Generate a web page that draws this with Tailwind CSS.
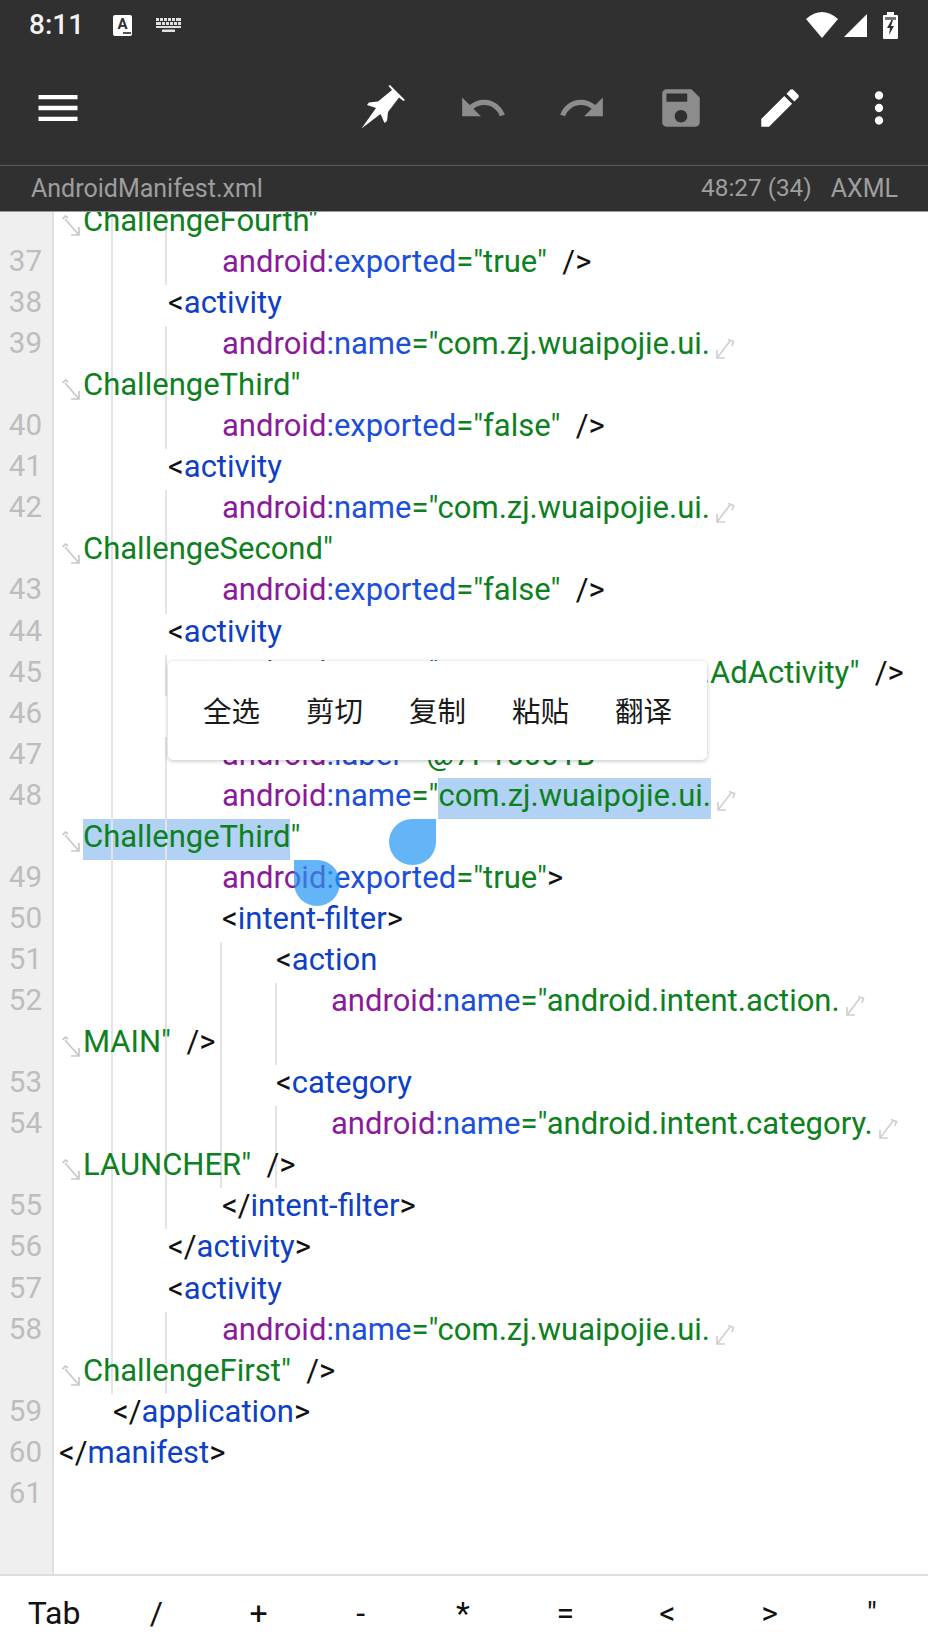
<!doctype html>
<html lang="zh-CN">
<head>
<meta charset="UTF-8">
<title>AndroidManifest.xml</title>
<script src="https://cdn.jsdelivr.net/npm/@tailwindcss/browser@4"></script>
</head>
<body class="bg-white">

<!-- wrap arrows -->
<svg class="hidden">
  <symbol id="wrap-end" viewBox="0 0 20 22"><path d="M15 3L2 20M2 12V20H10M13 1.5L18.500 3.500L17 8" fill="none" stroke="#d0d0d0" stroke-width="1.700"/></symbol>
  <symbol id="wrap-start" viewBox="0 0 20 22"><path d="M4 4L18 20M18 12V20H10M1.500 4L4.500 1L7 3" fill="none" stroke="#c8c8c8" stroke-width="1.700"/></symbol>
</svg>

<div class="relative flex h-[1650px] w-[928px] flex-col overflow-hidden font-[Roboto,sans-serif]">

  <header class="shrink-0 bg-[#303030]">
    <!-- status bar -->
    <div class="flex h-[50px] items-center pl-[29px] pr-[30px]">
      <span class="w-[54px] text-[28px] font-medium leading-none text-[#f2f2f2]">8:11</span>
      <div class="relative ml-[30px] flex h-[21px] w-[19px] justify-center rounded-[2px] bg-white">
        <span class="text-[15px] font-bold leading-[18px] text-[#303030]">A</span>
        <span class="absolute bottom-[2px] right-[1px] h-[2px] w-[8px] bg-[#555]"></span>
      </div>
      <svg class="ml-[24px]" width="25" height="14" viewBox="0 0 25 14" fill="#e0e0e0">
        <path d="M0 0h3v3H0zM4 0h3v3H4zM8 0h3v3H8zM12 0h3v3h-3zM16 0h3v3h-3zM20 0h5v3h-5zM0 4h5v3H0zM6 4h3v3H6zM10 4h3v3h-3zM14 4h3v3h-3zM18 4h3v3h-3zM22 4h3v3h-3zM0 8h25v2H0zM6 11.500h13V14H6z"/>
      </svg>
      <svg class="ml-auto" width="32" height="26" viewBox="0 0 32 26" fill="#fff"><path d="M0 7Q16-7 32 7L16 26Z"/></svg>
      <svg class="ml-[6px]" width="23" height="23" viewBox="0 0 23 23" fill="#fff"><path d="M23 0V23H0Z"/></svg>
      <svg class="ml-[16px]" width="15" height="27" viewBox="0 0 15 27">
        <path d="M4 0h7v3h3a1 1 0 0 1 1 1v22a1 1 0 0 1-1 1H1a1 1 0 0 1-1-1V4a1 1 0 0 1 1-1h3z" fill="#fff"/>
        <path d="M2 5h11v3H2z" fill="#777"/>
        <path d="M8.500 8L4 16h3l-1 7 5-9H8l2-6z" fill="#303030"/>
      </svg>
    </div>
    <!-- toolbar -->
    <div class="flex h-[115px] items-center">
      <svg class="ml-[32px]" width="52" height="52" viewBox="0 0 24 24" fill="#fff"><path d="M3 18h18v-2H3v2zm0-5h18v-2H3v2zm0-7v2h18V6H3z"/></svg>
      <svg class="ml-[265px]" width="70" height="65" viewBox="0 0 70 65" fill="#fff"><path d="M12.500 53.500L27 33L18 30L20 27.500L29 26.500L43 15L39.500 11L41 10L56 25L54.500 26L50 22.500L39 37L38 46L35.500 48L31.500 39Z"/></svg>
      <svg class="ml-[39px]" width="50" height="50" viewBox="0 0 24 24" fill="#8c8c8c"><path d="M12.500 8c-2.650 0-5.050.99-6.900 2.600L2 7v9h9l-3.620-3.620c1.390-1.160 3.160-1.880 5.120-1.880 3.540 0 6.550 2.310 7.600 5.500l2.370-.78C21.080 11.030 17.150 8 12.500 8z"/></svg>
      <svg class="ml-[49px]" width="50" height="50" viewBox="0 0 24 24" fill="#8c8c8c"><path d="M18.400 10.600C16.550 8.990 14.150 8 11.500 8c-4.650 0-8.580 3.030-9.960 7.220L3.900 16c1.050-3.190 4.050-5.500 7.600-5.500 1.950 0 3.730.72 5.120 1.880L13 16h9V7l-3.600 3.600z"/></svg>
      <svg class="ml-[49px]" width="50" height="50" viewBox="0 0 24 24" fill="#8c8c8c"><path d="M17 3H5c-1.110 0-2 .9-2 2v14c0 1.100.89 2 2 2h14c1.100 0 2-.9 2-2V7l-4-4zm-5 16c-1.660 0-3-1.340-3-3s1.340-3 3-3 3 1.340 3 3-1.340 3-3 3zm3-10H5V5h10v4z"/></svg>
      <svg class="ml-[49px]" width="50" height="50" viewBox="0 0 24 24" fill="#fff"><path d="M3 17.250V21h3.750L17.810 9.940l-3.750-3.750L3 17.250zM20.710 7.040c.39-.39.39-1.020 0-1.410l-2.340-2.340c-.39-.39-1.020-.39-1.410 0l-1.830 1.830 3.750 3.750 1.830-1.830z"/></svg>
      <svg class="ml-[49px]" width="50" height="50" viewBox="0 0 24 24" fill="#fff"><path d="M12 8c1.100 0 2-.9 2-2s-.9-2-2-2-2 .9-2 2 .9 2 2 2zm0 2c-1.100 0-2 .9-2 2s.9 2 2 2 2-.9 2-2-.9-2-2-2zm0 6c-1.100 0-2 .9-2 2s.9 2 2 2 2-.9 2-2-.9-2-2-2z"/></svg>
    </div>
    <!-- file info -->
    <div class="flex h-[47px] items-center border-y border-t-[#5a5a5a] border-b-[#9a9a9a] pl-[31px] pr-[30px] text-[25px] text-[#9e9e9e]">
      <span>AndroidManifest.xml</span>
      <span class="ml-auto text-[24.300px]">48:27 (34)</span>
      <span class="ml-[19px]">AXML</span>
    </div>
  </header>

  <!-- editor -->
  <main class="flex min-h-0 flex-1 flex-col overflow-hidden">
    <div class="mt-[-9.140px] flex flex-1 flex-col whitespace-pre text-[31px] leading-[35px] text-[#111]">

      <div class="relative flex h-[41.070px] shrink-0">
        <div class="w-[54px] shrink-0 border-r-2 border-[#e0e0e0] bg-[#efefef]"></div>
        <div class="pl-[7px]"><svg class="mr-[2px] mt-[12px] inline-block h-[22px] w-[20px] align-top"><use href="#wrap-start"/></svg><span class="relative z-10 text-[#0d8020]">ChallengeFourth"</span></div>
        <span class="absolute left-[111px] top-0 h-full w-[2px] bg-[#e4e4e4]"></span>
        <span class="absolute left-[165px] top-0 h-full w-[2px] bg-[#e4e4e4]"></span>
      </div>

      <div class="relative flex h-[41.070px] shrink-0">
        <div class="w-[54px] shrink-0 border-r-2 border-[#e0e0e0] bg-[#efefef] pr-[10px] text-right text-[29.500px] text-[#bdbdbd]">37</div>
        <div class="pl-[168px]"><span class="text-[#8b1a9b]">android</span><span class="text-[#1c4fd8]">:exported</span><span class="text-[#0d8020]">="true"</span>  /&gt;</div>
        <span class="absolute left-[111px] top-0 h-full w-[2px] bg-[#e4e4e4]"></span>
        <span class="absolute left-[165px] top-0 h-full w-[2px] bg-[#e4e4e4]"></span>
      </div>

      <div class="relative flex h-[41.070px] shrink-0">
        <div class="w-[54px] shrink-0 border-r-2 border-[#e0e0e0] bg-[#efefef] pr-[10px] text-right text-[29.500px] text-[#bdbdbd]">38</div>
        <div class="pl-[114px]">&lt;<span class="text-[#0d40c4]">activity</span></div>
        <span class="absolute left-[111px] top-0 h-full w-[2px] bg-[#e4e4e4]"></span>
      </div>

      <div class="relative flex h-[41.070px] shrink-0">
        <div class="w-[54px] shrink-0 border-r-2 border-[#e0e0e0] bg-[#efefef] pr-[10px] text-right text-[29.500px] text-[#bdbdbd]">39</div>
        <div class="pl-[168px]"><span class="text-[#8b1a9b]">android</span><span class="text-[#1c4fd8]">:name</span><span class="text-[#0d8020]">="com.zj.wuaipojie.ui.</span><svg class="ml-[5px] mt-[12px] inline-block h-[22px] w-[20px] align-top"><use href="#wrap-end"/></svg></div>
        <span class="absolute left-[111px] top-0 h-full w-[2px] bg-[#e4e4e4]"></span>
        <span class="absolute left-[165px] top-0 h-full w-[2px] bg-[#e4e4e4]"></span>
      </div>

      <div class="relative flex h-[41.070px] shrink-0">
        <div class="w-[54px] shrink-0 border-r-2 border-[#e0e0e0] bg-[#efefef]"></div>
        <div class="pl-[7px]"><svg class="mr-[2px] mt-[12px] inline-block h-[22px] w-[20px] align-top"><use href="#wrap-start"/></svg><span class="relative z-10 text-[#0d8020]">ChallengeThird"</span></div>
        <span class="absolute left-[111px] top-0 h-full w-[2px] bg-[#e4e4e4]"></span>
        <span class="absolute left-[165px] top-0 h-full w-[2px] bg-[#e4e4e4]"></span>
      </div>

      <div class="relative flex h-[41.070px] shrink-0">
        <div class="w-[54px] shrink-0 border-r-2 border-[#e0e0e0] bg-[#efefef] pr-[10px] text-right text-[29.500px] text-[#bdbdbd]">40</div>
        <div class="pl-[168px]"><span class="text-[#8b1a9b]">android</span><span class="text-[#1c4fd8]">:exported</span><span class="text-[#0d8020]">="false"</span>  /&gt;</div>
        <span class="absolute left-[111px] top-0 h-full w-[2px] bg-[#e4e4e4]"></span>
        <span class="absolute left-[165px] top-0 h-full w-[2px] bg-[#e4e4e4]"></span>
      </div>

      <div class="relative flex h-[41.070px] shrink-0">
        <div class="w-[54px] shrink-0 border-r-2 border-[#e0e0e0] bg-[#efefef] pr-[10px] text-right text-[29.500px] text-[#bdbdbd]">41</div>
        <div class="pl-[114px]">&lt;<span class="text-[#0d40c4]">activity</span></div>
        <span class="absolute left-[111px] top-0 h-full w-[2px] bg-[#e4e4e4]"></span>
      </div>

      <div class="relative flex h-[41.070px] shrink-0">
        <div class="w-[54px] shrink-0 border-r-2 border-[#e0e0e0] bg-[#efefef] pr-[10px] text-right text-[29.500px] text-[#bdbdbd]">42</div>
        <div class="pl-[168px]"><span class="text-[#8b1a9b]">android</span><span class="text-[#1c4fd8]">:name</span><span class="text-[#0d8020]">="com.zj.wuaipojie.ui.</span><svg class="ml-[5px] mt-[12px] inline-block h-[22px] w-[20px] align-top"><use href="#wrap-end"/></svg></div>
        <span class="absolute left-[111px] top-0 h-full w-[2px] bg-[#e4e4e4]"></span>
        <span class="absolute left-[165px] top-0 h-full w-[2px] bg-[#e4e4e4]"></span>
      </div>

      <div class="relative flex h-[41.070px] shrink-0">
        <div class="w-[54px] shrink-0 border-r-2 border-[#e0e0e0] bg-[#efefef]"></div>
        <div class="pl-[7px]"><svg class="mr-[2px] mt-[12px] inline-block h-[22px] w-[20px] align-top"><use href="#wrap-start"/></svg><span class="relative z-10 text-[#0d8020]">ChallengeSecond"</span></div>
        <span class="absolute left-[111px] top-0 h-full w-[2px] bg-[#e4e4e4]"></span>
        <span class="absolute left-[165px] top-0 h-full w-[2px] bg-[#e4e4e4]"></span>
      </div>

      <div class="relative flex h-[41.070px] shrink-0">
        <div class="w-[54px] shrink-0 border-r-2 border-[#e0e0e0] bg-[#efefef] pr-[10px] text-right text-[29.500px] text-[#bdbdbd]">43</div>
        <div class="pl-[168px]"><span class="text-[#8b1a9b]">android</span><span class="text-[#1c4fd8]">:exported</span><span class="text-[#0d8020]">="false"</span>  /&gt;</div>
        <span class="absolute left-[111px] top-0 h-full w-[2px] bg-[#e4e4e4]"></span>
        <span class="absolute left-[165px] top-0 h-full w-[2px] bg-[#e4e4e4]"></span>
      </div>

      <div class="relative flex h-[41.070px] shrink-0">
        <div class="w-[54px] shrink-0 border-r-2 border-[#e0e0e0] bg-[#efefef] pr-[10px] text-right text-[29.500px] text-[#bdbdbd]">44</div>
        <div class="pl-[114px]">&lt;<span class="text-[#0d40c4]">activity</span></div>
        <span class="absolute left-[111px] top-0 h-full w-[2px] bg-[#e4e4e4]"></span>
      </div>

      <div class="relative flex h-[41.070px] shrink-0">
        <div class="w-[54px] shrink-0 border-r-2 border-[#e0e0e0] bg-[#efefef] pr-[10px] text-right text-[29.500px] text-[#bdbdbd]">45</div>
        <div class="pl-[168px]"><span class="text-[#8b1a9b]">android</span><span class="text-[#1c4fd8]">:name</span><span class="text-[#0d8020]">="com.zj.wuaipojie.ui.AdActivity"</span>  /&gt;</div>
        <span class="absolute left-[111px] top-0 h-full w-[2px] bg-[#e4e4e4]"></span>
        <span class="absolute left-[165px] top-0 h-full w-[2px] bg-[#e4e4e4]"></span>
      </div>

      <div class="relative flex h-[41.070px] shrink-0">
        <div class="w-[54px] shrink-0 border-r-2 border-[#e0e0e0] bg-[#efefef] pr-[10px] text-right text-[29.500px] text-[#bdbdbd]">46</div>
        <div class="pl-[114px]">&lt;<span class="text-[#0d40c4]">activity</span></div>
        <span class="absolute left-[111px] top-0 h-full w-[2px] bg-[#e4e4e4]"></span>
      </div>

      <div class="relative flex h-[41.070px] shrink-0">
        <div class="w-[54px] shrink-0 border-r-2 border-[#e0e0e0] bg-[#efefef] pr-[10px] text-right text-[29.500px] text-[#bdbdbd]">47</div>
        <div class="pl-[168px]"><span class="text-[#8b1a9b]">android</span><span class="text-[#1c4fd8]">:label</span><span class="text-[#0d8020]">="@7F10001B"</span></div>
        <span class="absolute left-[111px] top-0 h-full w-[2px] bg-[#e4e4e4]"></span>
        <span class="absolute left-[165px] top-0 h-full w-[2px] bg-[#e4e4e4]"></span>
      </div>

      <div class="relative flex h-[41.070px] shrink-0">
        <div class="w-[54px] shrink-0 border-r-2 border-[#e0e0e0] bg-[#efefef] pr-[10px] text-right text-[29.500px] text-[#bdbdbd]">48</div>
        <div class="pl-[168px]"><span class="text-[#8b1a9b]">android</span><span class="text-[#1c4fd8]">:name</span><span class="text-[#0d8020]">="</span><span class="inline-block h-[41.070px] bg-[#b1d2f4] text-[#0d8020]">com.zj.wuaipojie.ui.</span><svg class="ml-[5px] mt-[12px] inline-block h-[22px] w-[20px] align-top"><use href="#wrap-end"/></svg></div>
        <span class="absolute left-[111px] top-0 h-full w-[2px] bg-[#e4e4e4]"></span>
        <span class="absolute left-[165px] top-0 h-full w-[2px] bg-[#e4e4e4]"></span>
      </div>

      <div class="relative flex h-[41.070px] shrink-0">
        <div class="w-[54px] shrink-0 border-r-2 border-[#e0e0e0] bg-[#efefef]"></div>
        <div class="pl-[7px]"><svg class="mr-[2px] mt-[12px] inline-block h-[22px] w-[20px] align-top"><use href="#wrap-start"/></svg><span class="inline-block h-[41.070px] bg-[#b1d2f4] text-[#0d8020]"><span class="relative z-10">ChallengeThird</span></span><span class="text-[#0d8020]">"</span></div>
        <span class="absolute left-[111px] top-0 h-full w-[2px] bg-[#e4e4e4]"></span>
        <span class="absolute left-[165px] top-0 h-full w-[2px] bg-[#e4e4e4]"></span>
      </div>

      <div class="relative flex h-[41.070px] shrink-0">
        <div class="w-[54px] shrink-0 border-r-2 border-[#e0e0e0] bg-[#efefef] pr-[10px] text-right text-[29.500px] text-[#bdbdbd]">49</div>
        <div class="pl-[168px]"><span class="text-[#8b1a9b]">android</span><span class="text-[#1c4fd8]">:exported</span><span class="text-[#0d8020]">="true"</span>&gt;</div>
        <span class="absolute left-[111px] top-0 h-full w-[2px] bg-[#e4e4e4]"></span>
        <span class="absolute left-[165px] top-0 h-full w-[2px] bg-[#e4e4e4]"></span>
      </div>

      <div class="relative flex h-[41.070px] shrink-0">
        <div class="w-[54px] shrink-0 border-r-2 border-[#e0e0e0] bg-[#efefef] pr-[10px] text-right text-[29.500px] text-[#bdbdbd]">50</div>
        <div class="pl-[168px]">&lt;<span class="text-[#0d40c4]">intent-filter</span>&gt;</div>
        <span class="absolute left-[111px] top-0 h-full w-[2px] bg-[#e4e4e4]"></span>
        <span class="absolute left-[165px] top-0 h-full w-[2px] bg-[#e4e4e4]"></span>
      </div>

      <div class="relative flex h-[41.070px] shrink-0">
        <div class="w-[54px] shrink-0 border-r-2 border-[#e0e0e0] bg-[#efefef] pr-[10px] text-right text-[29.500px] text-[#bdbdbd]">51</div>
        <div class="pl-[222px]">&lt;<span class="text-[#0d40c4]">action</span></div>
        <span class="absolute left-[111px] top-0 h-full w-[2px] bg-[#e4e4e4]"></span>
        <span class="absolute left-[165px] top-0 h-full w-[2px] bg-[#e4e4e4]"></span>
        <span class="absolute left-[220px] top-0 h-full w-[2px] bg-[#e4e4e4]"></span>
      </div>

      <div class="relative flex h-[41.070px] shrink-0">
        <div class="w-[54px] shrink-0 border-r-2 border-[#e0e0e0] bg-[#efefef] pr-[10px] text-right text-[29.500px] text-[#bdbdbd]">52</div>
        <div class="pl-[277px]"><span class="text-[#8b1a9b]">android</span><span class="text-[#1c4fd8]">:name</span><span class="text-[#0d8020]">="android.intent.action.</span><svg class="ml-[5px] mt-[12px] inline-block h-[22px] w-[20px] align-top"><use href="#wrap-end"/></svg></div>
        <span class="absolute left-[111px] top-0 h-full w-[2px] bg-[#e4e4e4]"></span>
        <span class="absolute left-[165px] top-0 h-full w-[2px] bg-[#e4e4e4]"></span>
        <span class="absolute left-[220px] top-0 h-full w-[2px] bg-[#e4e4e4]"></span>
        <span class="absolute left-[275px] top-0 h-full w-[2px] bg-[#e4e4e4]"></span>
      </div>

      <div class="relative flex h-[41.070px] shrink-0">
        <div class="w-[54px] shrink-0 border-r-2 border-[#e0e0e0] bg-[#efefef]"></div>
        <div class="pl-[7px]"><svg class="mr-[2px] mt-[12px] inline-block h-[22px] w-[20px] align-top"><use href="#wrap-start"/></svg><span class="relative z-10 text-[#0d8020]">MAIN"</span><span class="relative z-10">  /&gt;</span></div>
        <span class="absolute left-[111px] top-0 h-full w-[2px] bg-[#e4e4e4]"></span>
        <span class="absolute left-[165px] top-0 h-full w-[2px] bg-[#e4e4e4]"></span>
        <span class="absolute left-[220px] top-0 h-full w-[2px] bg-[#e4e4e4]"></span>
        <span class="absolute left-[275px] top-0 h-full w-[2px] bg-[#e4e4e4]"></span>
      </div>

      <div class="relative flex h-[41.070px] shrink-0">
        <div class="w-[54px] shrink-0 border-r-2 border-[#e0e0e0] bg-[#efefef] pr-[10px] text-right text-[29.500px] text-[#bdbdbd]">53</div>
        <div class="pl-[222px]">&lt;<span class="text-[#0d40c4]">category</span></div>
        <span class="absolute left-[111px] top-0 h-full w-[2px] bg-[#e4e4e4]"></span>
        <span class="absolute left-[165px] top-0 h-full w-[2px] bg-[#e4e4e4]"></span>
        <span class="absolute left-[220px] top-0 h-full w-[2px] bg-[#e4e4e4]"></span>
      </div>

      <div class="relative flex h-[41.070px] shrink-0">
        <div class="w-[54px] shrink-0 border-r-2 border-[#e0e0e0] bg-[#efefef] pr-[10px] text-right text-[29.500px] text-[#bdbdbd]">54</div>
        <div class="pl-[277px]"><span class="text-[#8b1a9b]">android</span><span class="text-[#1c4fd8]">:name</span><span class="text-[#0d8020]">="android.intent.category.</span><svg class="ml-[5px] mt-[12px] inline-block h-[22px] w-[20px] align-top"><use href="#wrap-end"/></svg></div>
        <span class="absolute left-[111px] top-0 h-full w-[2px] bg-[#e4e4e4]"></span>
        <span class="absolute left-[165px] top-0 h-full w-[2px] bg-[#e4e4e4]"></span>
        <span class="absolute left-[220px] top-0 h-full w-[2px] bg-[#e4e4e4]"></span>
        <span class="absolute left-[275px] top-0 h-full w-[2px] bg-[#e4e4e4]"></span>
      </div>

      <div class="relative flex h-[41.070px] shrink-0">
        <div class="w-[54px] shrink-0 border-r-2 border-[#e0e0e0] bg-[#efefef]"></div>
        <div class="pl-[7px]"><svg class="mr-[2px] mt-[12px] inline-block h-[22px] w-[20px] align-top"><use href="#wrap-start"/></svg><span class="relative z-10 text-[#0d8020]">LAUNCHER"</span><span class="relative z-10">  /&gt;</span></div>
        <span class="absolute left-[111px] top-0 h-full w-[2px] bg-[#e4e4e4]"></span>
        <span class="absolute left-[165px] top-0 h-full w-[2px] bg-[#e4e4e4]"></span>
        <span class="absolute left-[220px] top-0 h-full w-[2px] bg-[#e4e4e4]"></span>
        <span class="absolute left-[275px] top-0 h-full w-[2px] bg-[#e4e4e4]"></span>
      </div>

      <div class="relative flex h-[41.070px] shrink-0">
        <div class="w-[54px] shrink-0 border-r-2 border-[#e0e0e0] bg-[#efefef] pr-[10px] text-right text-[29.500px] text-[#bdbdbd]">55</div>
        <div class="pl-[168px]">&lt;/<span class="text-[#0d40c4]">intent-filter</span>&gt;</div>
        <span class="absolute left-[111px] top-0 h-full w-[2px] bg-[#e4e4e4]"></span>
        <span class="absolute left-[165px] top-0 h-full w-[2px] bg-[#e4e4e4]"></span>
      </div>

      <div class="relative flex h-[41.070px] shrink-0">
        <div class="w-[54px] shrink-0 border-r-2 border-[#e0e0e0] bg-[#efefef] pr-[10px] text-right text-[29.500px] text-[#bdbdbd]">56</div>
        <div class="pl-[114px]">&lt;/<span class="text-[#0d40c4]">activity</span>&gt;</div>
        <span class="absolute left-[111px] top-0 h-full w-[2px] bg-[#e4e4e4]"></span>
      </div>

      <div class="relative flex h-[41.070px] shrink-0">
        <div class="w-[54px] shrink-0 border-r-2 border-[#e0e0e0] bg-[#efefef] pr-[10px] text-right text-[29.500px] text-[#bdbdbd]">57</div>
        <div class="pl-[114px]">&lt;<span class="text-[#0d40c4]">activity</span></div>
        <span class="absolute left-[111px] top-0 h-full w-[2px] bg-[#e4e4e4]"></span>
      </div>

      <div class="relative flex h-[41.070px] shrink-0">
        <div class="w-[54px] shrink-0 border-r-2 border-[#e0e0e0] bg-[#efefef] pr-[10px] text-right text-[29.500px] text-[#bdbdbd]">58</div>
        <div class="pl-[168px]"><span class="text-[#8b1a9b]">android</span><span class="text-[#1c4fd8]">:name</span><span class="text-[#0d8020]">="com.zj.wuaipojie.ui.</span><svg class="ml-[5px] mt-[12px] inline-block h-[22px] w-[20px] align-top"><use href="#wrap-end"/></svg></div>
        <span class="absolute left-[111px] top-0 h-full w-[2px] bg-[#e4e4e4]"></span>
        <span class="absolute left-[165px] top-0 h-full w-[2px] bg-[#e4e4e4]"></span>
      </div>

      <div class="relative flex h-[41.070px] shrink-0">
        <div class="w-[54px] shrink-0 border-r-2 border-[#e0e0e0] bg-[#efefef]"></div>
        <div class="pl-[7px]"><svg class="mr-[2px] mt-[12px] inline-block h-[22px] w-[20px] align-top"><use href="#wrap-start"/></svg><span class="relative z-10 text-[#0d8020]">ChallengeFirst"</span><span class="relative z-10">  /&gt;</span></div>
        <span class="absolute left-[111px] top-0 h-full w-[2px] bg-[#e4e4e4]"></span>
        <span class="absolute left-[165px] top-0 h-full w-[2px] bg-[#e4e4e4]"></span>
      </div>

      <div class="relative flex h-[41.070px] shrink-0">
        <div class="w-[54px] shrink-0 border-r-2 border-[#e0e0e0] bg-[#efefef] pr-[10px] text-right text-[29.500px] text-[#bdbdbd]">59</div>
        <div class="pl-[59px]">&lt;/<span class="text-[#0d40c4]">application</span>&gt;</div>
      </div>

      <div class="relative flex h-[41.070px] shrink-0">
        <div class="w-[54px] shrink-0 border-r-2 border-[#e0e0e0] bg-[#efefef] pr-[10px] text-right text-[29.500px] text-[#bdbdbd]">60</div>
        <div class="pl-[5px]">&lt;/<span class="text-[#0d40c4]">manifest</span>&gt;</div>
      </div>

      <div class="relative flex h-[41.070px] shrink-0">
        <div class="w-[54px] shrink-0 border-r-2 border-[#e0e0e0] bg-[#efefef] pr-[10px] text-right text-[29.500px] text-[#bdbdbd]">61</div>
      </div>

      <div class="flex flex-1">
        <div class="w-[54px] shrink-0 border-r-2 border-[#e0e0e0] bg-[#efefef]"></div>
      </div>
    </div>
  </main>

  <!-- symbol keys -->
  <footer class="grid h-[76px] shrink-0 grid-cols-9 items-center border-t-2 border-[#dedede] bg-white pl-[3px] pr-[5px] text-[32px] leading-none text-[#111]">
    <span class="text-center">Tab</span>
    <span class="text-center">/</span>
    <span class="text-center">+</span>
    <span class="text-center">-</span>
    <span class="text-center">*</span>
    <span class="text-center">=</span>
    <span class="text-center">&lt;</span>
    <span class="text-center">&gt;</span>
    <span class="text-center">"</span>
  </footer>

  <!-- selection popup -->
  <div class="absolute left-[168px] top-[661px] z-20 flex h-[99px] w-[539px] items-center gap-[46px] rounded-[5px] bg-white px-[35px] font-['Noto_Sans_CJK_SC',sans-serif] text-[28.500px] leading-none text-[#1a1a1a] shadow-[0_1px_4px_rgba(0,0,0,0.25)]">
    <span>全选</span>
    <span>剪切</span>
    <span>复制</span>
    <span>粘贴</span>
    <span>翻译</span>
  </div>

  <!-- selection handles -->
  <div class="absolute left-[389px] top-[819px] z-20 h-[46px] w-[47px] rounded-full rounded-tr-none bg-[#2196f3]/70"></div>
  <div class="absolute left-[294px] top-[860px] z-20 h-[46px] w-[46px] rounded-full rounded-tl-none bg-[#2196f3]/70"></div>
</div>

</body>
</html>
